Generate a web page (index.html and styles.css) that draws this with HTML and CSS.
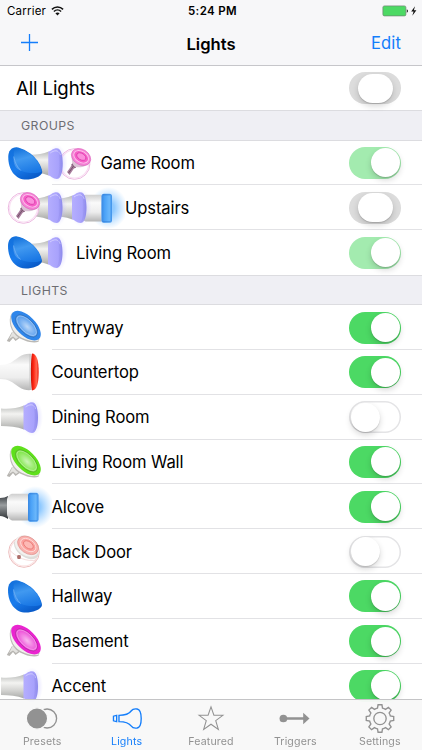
FILE: index.html
```html
<!DOCTYPE html>
<html lang="en">
<head>
    <meta charset="UTF-8">
    <meta name="viewport" content="width=device-width, initial-scale=1.0">
    <title>Lights</title>
    <link rel="stylesheet" href="styles.css">
</head>
<body>

    <!-- Shared bulb drawings -->
    <svg class="defs" aria-hidden="true">
        <defs>
            <linearGradient id="metal" x1="0" y1="0" x2="0" y2="1">
                <stop offset="0" stop-color="#b9bbb9"/>
                <stop offset=".35" stop-color="#f3f3f1"/>
                <stop offset=".65" stop-color="#d5d5d3"/>
                <stop offset="1" stop-color="#a9aaa8"/>
            </linearGradient>
            <linearGradient id="white" x1="0" y1="0" x2="0" y2="1">
                <stop offset="0" stop-color="#cfcfcf"/>
                <stop offset=".3" stop-color="#fafafa"/>
                <stop offset=".65" stop-color="#ededed"/>
                <stop offset="1" stop-color="#b5b5b5"/>
            </linearGradient>
            <linearGradient id="purple" x1="0" y1="0" x2="1" y2="0">
                <stop offset="0" stop-color="#b5aefe"/>
                <stop offset=".7" stop-color="#a8a2fc"/>
                <stop offset="1" stop-color="#8b88ea"/>
            </linearGradient>
            <linearGradient id="red" x1="0" y1="0" x2="1" y2="0">
                <stop offset="0" stop-color="#c91104"/>
                <stop offset=".35" stop-color="#ff2814"/>
                <stop offset=".7" stop-color="#ff6850"/>
                <stop offset="1" stop-color="#f01d0c"/>
            </linearGradient>
            <linearGradient id="blue" x1="0" y1="0" x2="1" y2="0">
                <stop offset="0" stop-color="#3a88e2"/>
                <stop offset=".3" stop-color="#4ba2f7"/>
                <stop offset=".75" stop-color="#6ab7fb"/>
                <stop offset="1" stop-color="#3d90e8"/>
            </linearGradient>
            <linearGradient id="dark" x1="0" y1="0" x2="0" y2="1">
                <stop offset="0" stop-color="#3d4246"/>
                <stop offset=".4" stop-color="#999d9f"/>
                <stop offset="1" stop-color="#303437"/>
            </linearGradient>
            <linearGradient id="egg" x1=".1" y1="0" x2=".6" y2="1">
                <stop offset="0" stop-color="#1270dc"/>
                <stop offset=".6" stop-color="#1a7cec"/>
                <stop offset="1" stop-color="#0a5cca"/>
            </linearGradient>
            <linearGradient id="eggShine" x1=".3" y1="0" x2=".6" y2="1">
                <stop offset="0" stop-color="#1674dd"/>
                <stop offset=".4" stop-color="#4199f0"/>
                <stop offset="1" stop-color="#1876e4"/>
            </linearGradient>
            <radialGradient id="glow">
                <stop offset=".3" stop-color="#46a6ff" stop-opacity=".6"/>
                <stop offset="1" stop-color="#6ab8ff" stop-opacity="0"/>
            </radialGradient>
            <radialGradient id="haze">
                <stop offset=".5" stop-color="#b5b0ff" stop-opacity=".35"/>
                <stop offset="1" stop-color="#c8c4ff" stop-opacity="0"/>
            </radialGradient>
            <radialGradient id="shine">
                <stop offset="0" stop-color="#fff" stop-opacity=".6"/>
                <stop offset="1" stop-color="#fff" stop-opacity="0"/>
            </radialGradient>

            <g id="go">
                <path d="M16 6.200C26 7.600 40 17.500 42 31C42 35.500 31.500 38.600 26 38.600C15 38.600 8 29 8 16C8 10 11 6.200 16 6.200Z" fill="url(#egg)"/>
                <path d="M16 6.700C26 8.200 39.500 18 41.500 30.500C36 33 27 32.500 20.500 29.500C17 25 14.500 20 13.800 15.500C13 11 14 8 16 6.700Z" fill="url(#eggShine)"/>
                <path d="M13.500 15.500C14.500 21 17 26 20.500 29.500C15.500 28 12.500 23 13.500 15.500Z" fill="#7db9f7" opacity=".45"/>
                <path d="M13.500 15.500C14.500 21 17 26 20.500 29.500" fill="none" stroke="#8cc4fb" stroke-width=".6"/>
            </g>

            <g id="tube">
                <ellipse cx="32" cy="22.500" rx="11" ry="19" fill="url(#haze)"/>
                <path d="M1 13.500C9 14 17 13.500 24 10.500V34.500C17 31.500 9 31 1 31Z" fill="url(#metal)"/>
                <path d="M23.500 10.800C27 9.500 28 7.200 32 7.200C36.500 7.200 38 15 38 22.500C38 30 36.500 38 32 38C28 38 27 35.500 23.500 34.300Z" fill="url(#purple)"/>
                <path d="M25.500 12C29 9.500 34 8 35.500 14" fill="none" stroke="#d8d4ff" stroke-width=".8"/>
                <path d="M33 8.500C36.500 14 36.500 30 33 37" fill="none" stroke="#9891ed" stroke-width=".5"/>
            </g>

            <g id="can">
                <ellipse cx="35" cy="23" rx="19" ry="21" fill="url(#glow)"/>
                <path d="M0 14C3 14 6 13 8 12V35C6 33.500 3 32 0 32Z" fill="url(#dark)"/>
                <path d="M12 9.800H28V36.500H12C9.500 35.500 7 33 7 30V16C7 13 9.500 10.500 12 9.800Z" fill="url(#white)"/>
                <rect x="28" y="8.800" width="10.500" height="29" rx="2.500" fill="url(#blue)"/>
                <path d="M29.500 9.800H37M29.500 36.800H37" stroke="#2f78d4" stroke-width=".7"/>
            </g>

            <g id="bloom">
                <path d="M12 27L6.800 36L9.500 37L13 33L15.500 36L21 32Z" fill="#b7b5b1"/>
                <path d="M13 26L9 34L13 31.500L16 34L20 31Z" fill="#e4e3e0"/>
                <path d="M12.500 7.500C8 12 9 24 16 30.500C22 36 33 38.800 38.500 36.800L39.500 34Z" fill="#bbb9b5"/>
                <path d="M12.500 7.500C9 12 10 23.500 17 29.500C23 34.500 33 37.500 39 35.500Z" fill="#f1f0ed"/>
                <g transform="rotate(45 26 20.700)">
                    <ellipse cx="26" cy="20.700" rx="18.600" ry="9.600" fill="currentColor"/>
                    <ellipse cx="26.500" cy="20.500" rx="14" ry="6.900" fill="#fff" fill-opacity=".2" stroke="#000" stroke-opacity=".25" stroke-width=".7"/>
                    <ellipse cx="26.500" cy="20.300" rx="12.500" ry="5.800" fill="none" stroke="#fff" stroke-opacity=".45" stroke-width=".7"/>
                    <ellipse cx="27.500" cy="20.500" rx="13" ry="6.500" fill="url(#shine)"/>
                </g>
            </g>

            <g id="flood">
                <path d="M0 15C9 15 12 12 19 7C23 4 28 3.500 31.500 4V40C28 40.500 23 40 19 37C12 32 9 29 0 29Z" fill="url(#white)"/>
                <path d="M30 4V40" stroke="#bcbcbc" stroke-width=".8"/>
                <path d="M32 3.600C36.500 3.600 38.700 10 38.700 22C38.700 34 36.500 40.400 32 40.400C30.500 34 30.500 10 32 3.600Z" fill="url(#red)"/>
            </g>

            <g id="globe">
                <circle cx="23" cy="23" r="15.300" fill="#fff" stroke="#eab0dc" stroke-width=".9"/>
                <circle cx="23" cy="23" r="14" fill="none" stroke="#f9dff3" stroke-width="1.200"/>
                <path d="M22 20L26 25L22 28L18 34L15.500 31L19 26Z" fill="#a77c9c"/>
                <path d="M22 25L17 32M20 23L24 27" stroke="#715268" stroke-width="1"/>
                <path d="M20 13C20 20 21 25 24 26C30 27 36 25 39 21Z" fill="#dbc1d5"/>
                <g transform="rotate(32 29.500 16)">
                    <ellipse cx="29.500" cy="16" rx="10.300" ry="7.700" fill="#f584d6" stroke="#d654b4" stroke-width=".5"/>
                    <ellipse cx="29.500" cy="15.800" rx="8" ry="5.500" fill="#f65fc8" stroke="#fcc4ec" stroke-width=".9"/>
                    <ellipse cx="29.500" cy="15.500" rx="5" ry="3.200" fill="#fb8fdc" stroke="#dc3eab" stroke-width=".8"/>
                </g>
            </g>

            <g id="ball">
                <circle cx="24" cy="23" r="15.300" fill="#fff" stroke="#e9b3b3" stroke-width=".9"/>
                <circle cx="24" cy="23" r="14" fill="none" stroke="#fbe3e3" stroke-width="1.300"/>
                <path d="M14 13C13 19 19 27 29 30C33 31 37 30 38.500 26L38 19L21 8Z" fill="#deddda"/>
                <path d="M9.500 21C17 29 27 33 37 31" fill="none" stroke="#f3d4d4" stroke-width=".8"/>
                <g transform="rotate(35 27 17)">
                    <ellipse cx="27" cy="17" rx="13" ry="9.600" fill="#f2f1ef"/>
                    <ellipse cx="27.500" cy="15.800" rx="11.500" ry="8" fill="#f9b1ad" stroke="#dc8985" stroke-width=".6"/>
                    <ellipse cx="27.500" cy="15.500" rx="8.500" ry="5.500" fill="#fba19e" stroke="#fde1df" stroke-width=".8"/>
                    <ellipse cx="27.500" cy="15.300" rx="5.500" ry="3.300" fill="#fdb9b5" stroke="#e77874" stroke-width=".8"/>
                </g>
                <path d="M19 26V30M17 28H21M17.500 26.500L20.500 29.500M20.500 26.500L17.500 29.500" stroke="#ad6f6b" stroke-width="1.100"/>
            </g>
        </defs>
    </svg>

    <header class="top-bar">
        <div class="status">
            <div class="carrier">
                <span>Carrier</span>
                <svg class="wifi" viewBox="0 0 13 10">
                    <path d="M.9 3.400C4 .300 9 .300 12.100 3.400M2.900 5.500C5 3.500 8 3.500 10.100 5.500" fill="none" stroke="#111" stroke-width="1.500"/>
                    <path d="M6.500 9.400L4.400 7.200C5.600 6.100 7.400 6.100 8.600 7.200Z" fill="#111"/>
                </svg>
            </div>
            <span class="time">5:24 PM</span>
            <svg class="battery" viewBox="0 0 36 12">
                <rect x=".9" y=".9" width="23" height="10" rx="1.500" fill="#4cd964" stroke="#6f8573" stroke-width=".7"/>
                <path d="M24.800 4.200C26.300 4.700 26.300 7.200 24.800 7.700Z" fill="#111"/>
                <path d="M33 1.200L29.200 6.500H31.600L30.300 10.800L34.400 5.200H31.900Z" fill="#111"/>
            </svg>
        </div>
        <nav class="nav">
            <button class="add" aria-label="Add">
                <svg viewBox="0 0 18 18"><path d="M9.500 0V17M1 8.500H18" stroke="#147efb" stroke-width="1.300"/></svg>
            </button>
            <h1>Lights</h1>
            <button class="edit">Edit</button>
        </nav>
    </header>

    <main>
        <div class="row all">
            <span class="name">All Lights</span>
            <span class="switch mixed"></span>
        </div>

        <h2>GROUPS</h2>
        <ul>
            <li class="row">
                <svg class="bulbs three" viewBox="0 0 100 44.800">
                    <use href="#globe" x="51.300"/><use href="#tube" x="24.500"/><use href="#go"/>
                </svg>
                <span class="name">Game Room</span>
                <span class="switch on dim"></span>
            </li>
            <li class="row">
                <svg class="bulbs four" viewBox="0 0 125 44.800">
                    <use href="#can" x="73.500"/><use href="#tube" x="48.500"/><use href="#tube" x="24.500"/><use href="#globe" x=".5"/>
                </svg>
                <span class="name">Upstairs</span>
                <span class="switch mixed"></span>
            </li>
            <li class="row">
                <svg class="bulbs two" viewBox="0 0 76 44.800">
                    <use href="#tube" x="24.500"/><use href="#go"/>
                </svg>
                <span class="name">Living Room</span>
                <span class="switch on dim"></span>
            </li>
        </ul>

        <h2>LIGHTS</h2>
        <ul>
            <li class="row">
                <svg class="bulbs azure" viewBox="0 0 51.500 44.800"><use href="#bloom"/></svg>
                <span class="name">Entryway</span>
                <span class="switch on"></span>
            </li>
            <li class="row">
                <svg class="bulbs" viewBox="0 0 51.500 44.800"><use href="#flood"/></svg>
                <span class="name">Countertop</span>
                <span class="switch on"></span>
            </li>
            <li class="row">
                <svg class="bulbs" viewBox="0 0 51.500 44.800"><use href="#tube"/></svg>
                <span class="name">Dining Room</span>
                <span class="switch"></span>
            </li>
            <li class="row">
                <svg class="bulbs lime" viewBox="0 0 51.500 44.800"><use href="#bloom"/></svg>
                <span class="name">Living Room Wall</span>
                <span class="switch on"></span>
            </li>
            <li class="row">
                <svg class="bulbs" viewBox="0 0 51.500 44.800"><use href="#can"/></svg>
                <span class="name">Alcove</span>
                <span class="switch on"></span>
            </li>
            <li class="row">
                <svg class="bulbs" viewBox="0 0 51.500 44.800"><use href="#ball"/></svg>
                <span class="name">Back Door</span>
                <span class="switch"></span>
            </li>
            <li class="row">
                <svg class="bulbs" viewBox="0 0 51.500 44.800"><use href="#go"/></svg>
                <span class="name">Hallway</span>
                <span class="switch on"></span>
            </li>
            <li class="row">
                <svg class="bulbs magenta" viewBox="0 0 51.500 44.800"><use href="#bloom"/></svg>
                <span class="name">Basement</span>
                <span class="switch on"></span>
            </li>
            <li class="row">
                <svg class="bulbs" viewBox="0 0 51.500 44.800"><use href="#tube"/></svg>
                <span class="name">Accent</span>
                <span class="switch on"></span>
            </li>
        </ul>
    </main>

    <footer class="tabs">
        <a class="tab">
            <svg viewBox="-16 -15 32 30">
                <circle cx="5.300" cy="0" r="9.800"/>
                <circle class="fill gap" cx="-5.200" cy="0" r="11"/>
            </svg>
            <span>Presets</span>
        </a>
        <a class="tab active">
            <svg viewBox="-16 -15 32 30">
                <path d="M-8.300 -3.200C-2 -3.200 2 -4.500 4.500 -8C5.800 -9.900 8 -10.200 10.500 -9.800C13 -9.300 14.700 -5 14.700 0C14.700 5 13 9.300 10.500 9.800C8 10.200 5.800 9.900 4.500 8C2 4.500 -2 3.200 -8.300 3.200Z"/>
                <path d="M-10.700 -3.200V3.200L-14 2.400V-2.400Z"/>
            </svg>
            <span>Lights</span>
        </a>
        <a class="tab">
            <svg viewBox="-16 -15 32 30">
                <path class="thin" d="M0 -12L3 -3.500L12.300 -3.300L4.900 2.200L7.600 11.200L0 5.900L-7.600 11.200L-4.900 2.200L-12.300 -3.300L-3 -3.500Z"/>
            </svg>
            <span>Featured</span>
        </a>
        <a class="tab">
            <svg viewBox="-16 -15 32 30">
                <circle class="fill" cx="-12" cy="0" r="4"/>
                <path class="thick" d="M-10 0H10"/>
                <path class="fill" d="M8.500 -6L15 0L8.500 6Z"/>
            </svg>
            <span>Triggers</span>
        </a>
        <a class="tab">
            <svg viewBox="-16 -15 32 30">
                <path d="M-2.600 -10.700L-2 -14.200H2L2.600 -10.700A11 11 0 0 1 5.700 -9.400L8.700 -11.500L11.500 -8.700L9.400 -5.700A11 11 0 0 1 10.700 -2.600L14.200 -2V2L10.700 2.600A11 11 0 0 1 9.400 5.700L11.500 8.700L8.700 11.500L5.700 9.400A11 11 0 0 1 2.600 10.700L2 14.200H-2L-2.600 10.700A11 11 0 0 1 -5.700 9.400L-8.700 11.500L-11.500 8.700L-9.400 5.700A11 11 0 0 1 -10.700 2.600L-14.200 2V-2L-10.700 -2.600A11 11 0 0 1 -9.400 -5.700L-11.500 -8.700L-8.700 -11.500L-5.700 -9.400A11 11 0 0 1 -2.600 -10.700Z"/>
                <circle cx="0" cy="0" r="6.400"/>
            </svg>
            <span>Settings</span>
        </a>
    </footer>

</body>
</html>
```

FILE: styles.css
```css
* {
    box-sizing: border-box;
}
body {
    margin: 0;
    height: 100vh;
    overflow: hidden;
    font-family: Inter, "Liberation Sans", sans-serif;
    color: #000;
    background-color: #fff;
}
.defs {
    position: absolute;
    width: 0;
    height: 0;
}
.top-bar {
    height: 66px;
    background-color: #f7f7f9;
    border-bottom: 1px solid #c6c6ca;
}
.status {
    display: grid;
    grid-template-columns: 1fr auto 1fr;
    align-items: center;
    height: 22px;
    padding: 0 4px 0 7px;
    font-size: 11.5px;
}
.carrier {
    display: flex;
    align-items: center;
    gap: 5px;
    letter-spacing: 0.2px;
}
.wifi {
    width: 13px;
    height: 10px;
}
.time {
    font-weight: 600;
    letter-spacing: 0.35px;
}
.battery {
    justify-self: end;
    width: 36px;
    height: 12px;
}
.nav {
    display: grid;
    grid-template-columns: 1fr auto 1fr;
    align-items: center;
    height: 43px;
    padding: 0 21px 0 20px;
}
.nav h1 {
    margin: 0;
    padding-left: 1px;
    font-size: 16.6px;
    font-weight: 600;
}
.nav button {
    padding: 0;
    border: none;
    background: none;
    font: inherit;
    font-size: 16.6px;
    color: #147efb;
}
.add {
    display: flex;
}
.add svg {
    width: 18px;
    height: 18px;
    margin-bottom: 2px;
}
.nav .edit {
    justify-self: end;
    letter-spacing: 0.1px;
    margin-top: -1px;
}
ul {
    margin: 0;
    padding: 0;
    list-style: none;
}
h2 {
    display: flex;
    align-items: center;
    margin: 0;
    height: 30.2px;
    padding: 1px 0 0 21px;
    background-color: #efeff4;
    border-top: 1px solid #dcdce0;
    border-bottom: 1px solid #dcdce0;
    font-size: 12.3px;
    font-weight: 400;
    letter-spacing: 0.4px;
    color: #6d6d72;
}
.row {
    display: flex;
    align-items: center;
    height: 44.8px;
    padding-right: 21px;
    background: linear-gradient(#e2e2e5, #e2e2e5) right bottom / calc(100% - 51.5px) 1px no-repeat;
}
.row:last-child {
    background: none;
}
.all {
    height: 44.4px;
    padding-left: 16px;
    background: none;
}
.name {
    flex: 1;
    font-size: 16.6px;
    letter-spacing: -0.12px;
}
.all .name {
    font-size: 18.6px;
}
.bulbs {
    flex: none;
    width: 51.5px;
    height: 44.8px;
}
.two {
    width: 76px;
}
.three {
    width: 100.5px;
}
.four {
    width: 125px;
}
.azure {
    color: #2f86ea;
}
.lime {
    color: #5fe01c;
}
.magenta {
    color: #ea25d0;
}
.switch {
    display: flex;
    width: 52px;
    height: 32px;
    padding: 1.5px;
    border-radius: 16px;
    background-color: #fff;
    box-shadow: inset 0 0 0 1.5px #e4e4e6;
}
.switch::before {
    content: "";
    width: 29px;
    height: 29px;
    border-radius: 50%;
    background-color: #fff;
    box-shadow: 0 3px 6px rgba(0, 0, 0, 0.16), 0 1px 1px rgba(0, 0, 0, 0.14);
}
.switch.on {
    justify-content: flex-end;
    background-color: #4cd964;
    box-shadow: none;
}
.switch.dim {
    background-color: #a3ebaf;
}
.switch.mixed {
    justify-content: center;
    background-color: #dcdcdc;
    box-shadow: none;
}
.switch.mixed::before {
    width: 35px;
    border-radius: 15px;
}
.tabs {
    position: fixed;
    left: 0;
    right: 0;
    bottom: 0;
    display: flex;
    height: 51px;
    background-color: rgba(248, 248, 248, 0.93);
    border-top: 1px solid #c4c4c6;
    backdrop-filter: blur(14px);
}
.tab {
    flex: 1;
    display: flex;
    flex-direction: column;
    align-items: center;
    padding-top: 4px;
    font-size: 10.6px;
    line-height: 17px;
    letter-spacing: 0.15px;
    color: #929292;
}
.tab svg {
    width: 32px;
    height: 30px;
    fill: none;
    stroke: currentColor;
    stroke-width: 1.4;
}
.tab .fill {
    fill: currentColor;
    stroke: none;
}
.tab .gap {
    stroke: #f8f8f8;
    stroke-width: 1.2;
}
.tab .thin {
    stroke-width: 1.1;
}
.tab .thick {
    stroke-width: 2.6;
}
.active {
    color: #147efb;
}
```
